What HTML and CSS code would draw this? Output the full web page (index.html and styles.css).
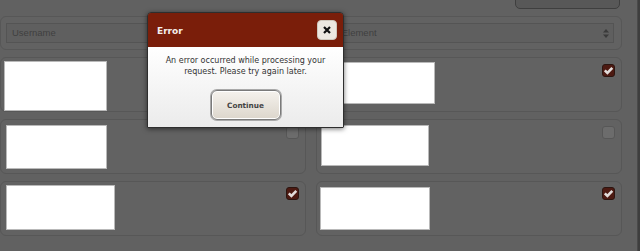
FILE: index.html
```html
<!DOCTYPE html>
<html>
<head>
<meta charset="utf-8">
<link rel="stylesheet" href="styles.css">
</head>
<body>
<div class="screen">
  <main class="page">
    <div class="topbar"><button class="top-btn" type="button"></button></div>
    <section class="grid">
      <div class="card filter">
        <div class="field">Username</div>
      </div>
      <div class="card filter">
        <div class="field select">By Element
          <svg class="arrows" width="6" height="9" viewBox="0 0 6 9"><path d="M3 0 L6 3.6 L0 3.6 Z M3 9 L6 5.4 L0 5.4 Z" fill="#3a3a3a"/></svg>
        </div>
      </div>

      <div class="card item r2l">
        <div class="thumb t1"></div>
        <span class="check on"><svg width="11" height="11" viewBox="0 0 11 11"><path d="M1.8 5.4 L4.4 8 L9.3 2.8" fill="none" stroke="#e2dcda" stroke-width="2.6"/></svg></span>
      </div>
      <div class="card item r2r">
        <div class="thumb t2"></div>
        <span class="check on"><svg width="11" height="11" viewBox="0 0 11 11"><path d="M1.8 5.4 L4.4 8 L9.3 2.8" fill="none" stroke="#e2dcda" stroke-width="2.6"/></svg></span>
      </div>

      <div class="card item r3">
        <div class="thumb t3"></div>
        <span class="check"></span>
      </div>
      <div class="card item r3">
        <div class="thumb t4"></div>
        <span class="check"></span>
      </div>

      <div class="card item r4l">
        <div class="thumb t5"></div>
        <span class="check on"><svg width="11" height="11" viewBox="0 0 11 11"><path d="M1.8 5.4 L4.4 8 L9.3 2.8" fill="none" stroke="#e2dcda" stroke-width="2.6"/></svg></span>
      </div>
      <div class="card item r4r">
        <div class="thumb t6"></div>
        <span class="check on"><svg width="11" height="11" viewBox="0 0 11 11"><path d="M1.8 5.4 L4.4 8 L9.3 2.8" fill="none" stroke="#e2dcda" stroke-width="2.6"/></svg></span>
      </div>
    </section>
  </main>
  <aside class="edge"></aside>

  <div class="dialog">
    <div class="dlg-head">
      <span class="dlg-title">Error</span>
      <button class="dlg-close" type="button"><svg width="8" height="8" viewBox="0 0 8 8"><path d="M1 1 L7 7 M7 1 L1 7" stroke="#111" stroke-width="2.2"/></svg></button>
    </div>
    <div class="dlg-body">
      <p class="dlg-msg">An error occurred while processing your<br>request. Please try again later.</p>
      <button class="dlg-btn" type="button">Continue</button>
    </div>
  </div>
</div>
</body>
</html>
```

FILE: styles.css
```css
* { box-sizing: border-box; }
html, body { margin: 0; padding: 0; }
body {
  background: #3c3c3c;
  font-family: "DejaVu Sans", Verdana, sans-serif;
  width: 640px;
  height: 251px;
  overflow: hidden;
}
.screen {
  position: relative;
  display: flex;
  width: 640px;
  height: 251px;
}
.page {
  width: 637px;
  height: 251px;
  background: #616161;
  overflow: hidden;
}
.edge {
  width: 3px;
  background: #3e3e3e;
  border-left: 1px solid #4a4a4a;
}
.topbar {
  height: 16px;
  display: flex;
  justify-content: flex-end;
  padding-right: 17px;
}
.top-btn {
  width: 105px;
  height: 20px;
  margin-top: -11px;
  background: #585858;
  border: 1px solid #3f3f3f;
  border-radius: 5px;
  padding: 0;
}
.grid {
  display: grid;
  grid-template-columns: 306px 306px;
  column-gap: 10px;
  row-gap: 7px;
}
.card {
  background: #626262;
  border: 1px solid #575757;
  border-radius: 6px;
}
.filter {
  height: 34px;
  padding: 6px 7px 0 5px;
}
.field {
  height: 20px;
  border: 1px solid #545454;
  background: #5f5f5f;
  color: #3f3f3f;
  font-family: "Liberation Sans", Arial, sans-serif;
  font-size: 9.5px;
  line-height: 18px;
  padding-left: 5px;
  display: flex;
  justify-content: space-between;
  align-items: center;
}
.select { padding-right: 4px; padding-left: 5px; }
.arrows { display: block; }

.item {
  height: 55px;
  display: flex;
  justify-content: space-between;
  align-items: flex-start;
  padding: 3px 6px 0 3px;
}
.thumb {
  background: #fff;
  border: 1px solid #b9b9b9;
}
.t1 { width: 103px; height: 50px; }
.t2 { width: 114px; height: 42px; margin-top: 1px; margin-left: 1px; }
.t3 { width: 101px; height: 44px; margin-top: 2px; margin-left: 2px; }
.t4 { width: 108px; height: 41px; margin-top: 2px; margin-left: 1px; }
.t5 { width: 109px; height: 45px; margin-left: 2px; }
.t6 { width: 110px; height: 43px; margin-top: 2px; }
.r2r .check { margin-top: 3px; }
.r3 .check { margin-top: 3px; }
.r4l .check, .r4r .check { margin-top: 2px; }

.check {
  width: 13px;
  height: 13px;
  border-radius: 3px;
  background: #6c6c6c;
  border: 1px solid #575757;
  display: flex;
  align-items: center;
  justify-content: center;
}
.check.on {
  background: #4d1a12;
  border-color: #2c1510;
}
.check svg { display: block; }

.dialog {
  position: absolute;
  left: 147px;
  top: 12px;
  width: 197px;
  height: 116px;
  border: 1px solid #2e2e2e;
  border-radius: 4px 4px 1px 1px;
  box-shadow: 0 1px 5px rgba(0,0,0,.55);
  overflow: hidden;
  display: flex;
  flex-direction: column;
}
.dlg-head {
  height: 34px;
  background: #7a1e0a;
  display: flex;
  justify-content: space-between;
  align-items: center;
  padding: 0 6px 0 9px;
}
.dlg-title {
  color: #f4eeec;
  font-weight: bold;
  font-size: 9px;
  margin-top: 1px;
}
.dlg-close {
  width: 20px;
  height: 20px;
  border: 1px solid #cfc8bd;
  border-radius: 4px;
  background: #ece8e1;
  padding: 0;
  display: flex;
  align-items: center;
  justify-content: center;
  margin-top: -1px;
}
.dlg-close svg { display: block; }
.dlg-body {
  flex: 1;
  background: linear-gradient(#ffffff, #ebebeb);
  display: flex;
  flex-direction: column;
  align-items: center;
}
.dlg-msg {
  margin: 8px 0 0;
  font-size: 8px;
  line-height: 11px;
  color: #333;
  text-align: center;
}
.dlg-btn {
  margin-top: 13px;
  width: 70px;
  height: 30px;
  border: 1px solid #7a7a7a;
  border-radius: 6px;
  box-shadow: inset 0 0 0 1px #fff, 0 0 0 1px #a9a9a9;
  background: linear-gradient(#f5f2ed, #dcd6cc);
  font-family: "DejaVu Sans", Verdana, sans-serif;
  font-weight: bold;
  font-size: 7.3px;
  color: #454545;
  padding: 0;
}
```
